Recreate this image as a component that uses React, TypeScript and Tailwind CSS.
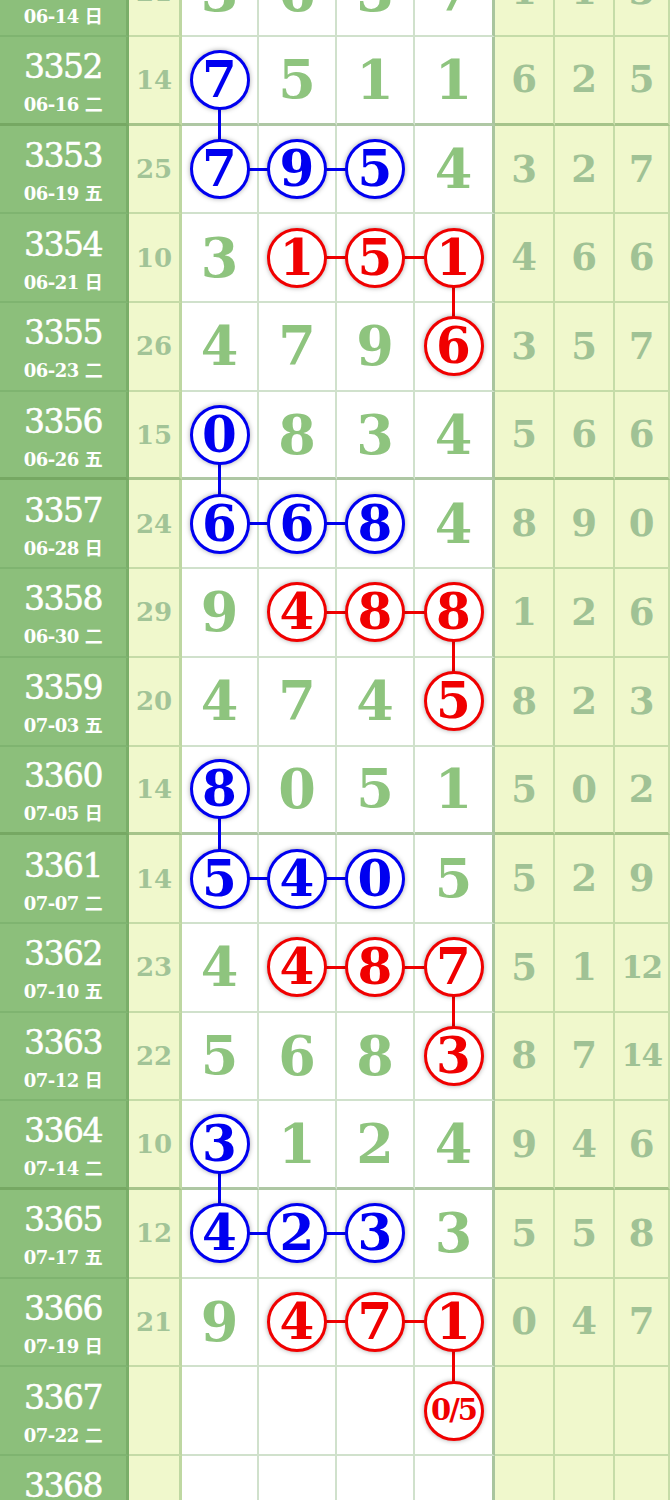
import React from 'react';

type Row = { p: string; d: string; w: string; s: string; m: string[]; c: string; r: string[] };

const rows: Row[] = [
  { p: '3351', d: '06-14', w: '日', s: '21', m: ['3', '6', '3', '7'], c: '....', r: ['1', '1', '3'] },
  { p: '3352', d: '06-16', w: '二', s: '14', m: ['7', '5', '1', '1'], c: 'b...', r: ['6', '2', '5'] },
  { p: '3353', d: '06-19', w: '五', s: '25', m: ['7', '9', '5', '4'], c: 'bbb.', r: ['3', '2', '7'] },
  { p: '3354', d: '06-21', w: '日', s: '10', m: ['3', '1', '5', '1'], c: '.rrr', r: ['4', '6', '6'] },
  { p: '3355', d: '06-23', w: '二', s: '26', m: ['4', '7', '9', '6'], c: '...r', r: ['3', '5', '7'] },
  { p: '3356', d: '06-26', w: '五', s: '15', m: ['0', '8', '3', '4'], c: 'b...', r: ['5', '6', '6'] },
  { p: '3357', d: '06-28', w: '日', s: '24', m: ['6', '6', '8', '4'], c: 'bbb.', r: ['8', '9', '0'] },
  { p: '3358', d: '06-30', w: '二', s: '29', m: ['9', '4', '8', '8'], c: '.rrr', r: ['1', '2', '6'] },
  { p: '3359', d: '07-03', w: '五', s: '20', m: ['4', '7', '4', '5'], c: '...r', r: ['8', '2', '3'] },
  { p: '3360', d: '07-05', w: '日', s: '14', m: ['8', '0', '5', '1'], c: 'b...', r: ['5', '0', '2'] },
  { p: '3361', d: '07-07', w: '二', s: '14', m: ['5', '4', '0', '5'], c: 'bbb.', r: ['5', '2', '9'] },
  { p: '3362', d: '07-10', w: '五', s: '23', m: ['4', '4', '8', '7'], c: '.rrr', r: ['5', '1', '12'] },
  { p: '3363', d: '07-12', w: '日', s: '22', m: ['5', '6', '8', '3'], c: '...r', r: ['8', '7', '14'] },
  { p: '3364', d: '07-14', w: '二', s: '10', m: ['3', '1', '2', '4'], c: 'b...', r: ['9', '4', '6'] },
  { p: '3365', d: '07-17', w: '五', s: '12', m: ['4', '2', '3', '3'], c: 'bbb.', r: ['5', '5', '8'] },
  { p: '3366', d: '07-19', w: '日', s: '21', m: ['9', '4', '7', '1'], c: '.rrr', r: ['0', '4', '7'] },
  { p: '3367', d: '07-22', w: '二', s: '', m: ['', '', '', '0/5'], c: '...r', r: ['', '', ''] },
  { p: '3368', d: '07-24', w: '五', s: '', m: ['', '', '', ''], c: '....', r: ['', '', ''] },
];

const mainW = ['w-[77px]', 'w-[78px]', 'w-[78px]', 'w-[80px]'];
const rightW = ['w-[60px]', 'w-[60px]', 'w-[55px]'];

const serif = "font-['DejaVu_Serif','Noto_Sans_CJK_SC',serif]";
const cjk = "font-['Noto_Sans_CJK_SC',sans-serif]";

function Circle({ v, color }: { v: string; color: string }) {
  const blue = color === 'b';
  const small = v.length > 1;
  return (
    <div
      className={`relative z-10 flex h-[60px] w-[60px] items-center justify-center rounded-full border-[3px] bg-white font-bold leading-none shadow-[0_0_5px_rgba(0,0,0,0.35)] ${
        blue ? 'border-[#0000f0] text-[#0000f0]' : 'border-[#f00000] text-[#f00000]'
      } ${small ? 'text-[29px] tracking-[-2px]' : 'text-[50px]'}`}
    >
      {v}
    </div>
  );
}

export default function App() {
  return (
    <div className={`w-[670px] overflow-hidden bg-white ${serif}`}>
      <div className="-mt-[51.7px]">
        {rows.map((row, ri) => {
          const thick = ri >= 1 && (ri - 1) % 4 === 0;
          const prev = rows[ri - 1];
          const next = rows[ri + 1];
          const bb = thick
            ? 'border-b-[3px] border-b-[rgba(95,145,75,0.5)]'
            : 'border-b-2 border-b-[rgba(100,155,85,0.3)]';
          return (
            <div key={row.p} className="flex h-[88.7px]">
              <div
                className={`flex h-full w-[129px] shrink-0 flex-col items-center justify-center border-r-[3px] border-r-[#7aae69] bg-[#8cbf7b] pt-[3px] text-white ${bb}`}
              >
                <div className="text-[33px] leading-[40px] tracking-[-1.5px] [-webkit-text-stroke:0.5px_#fff]">
                  {row.p}
                </div>
                <div className="mt-[5px] text-[18px] font-bold leading-[22px] tracking-[-0.5px]">
                  {row.d} <span className={`${cjk} font-bold`}>{row.w}</span>
                </div>
              </div>
              <div
                className={`flex h-full w-[53px] shrink-0 items-center justify-center border-r-[3px] border-r-[rgba(100,155,85,0.35)] bg-[#f0f8cc] text-[26px] font-bold leading-none text-[#a2c497] ${bb}`}
              >
                {row.s}
              </div>
              {row.m.map((v, ci) => {
                const col = row.c[ci];
                const circled = col !== '.';
                const left = circled && ci > 0 && row.c[ci - 1] === col;
                const right = circled && ci < 3 && row.c[ci + 1] === col;
                const up = circled && prev && prev.c[ci] === col;
                const down = circled && next && next.c[ci] === col;
                const lineBg = col === 'b' ? 'bg-[#0000f0]' : 'bg-[#f00000]';
                return (
                  <div
                    key={ci}
                    className={`relative flex h-full shrink-0 items-center justify-center bg-white ${mainW[ci]} ${bb} ${
                      ci === 3 ? 'border-r-[3px] border-r-[rgba(100,150,80,0.55)]' : 'border-r-2 border-r-[rgba(100,155,85,0.3)]'
                    }`}
                  >
                    {left && <div className={`absolute left-0 right-1/2 top-1/2 -mt-[1.5px] h-[3px] ${lineBg}`} />}
                    {right && <div className={`absolute -right-[2px] left-1/2 top-1/2 -mt-[1.5px] h-[3px] ${lineBg}`} />}
                    {up && <div className={`absolute bottom-1/2 left-1/2 top-0 -ml-[1.5px] w-[3px] ${lineBg}`} />}
                    {down && <div className={`absolute -bottom-[3px] left-1/2 top-1/2 -ml-[1.5px] w-[3px] ${lineBg}`} />}
                    {circled && v !== '' ? (
                      <Circle v={v} color={col} />
                    ) : (
                      <span className="text-[54px] font-bold leading-none text-[#8ec47e]">{v}</span>
                    )}
                  </div>
                );
              })}
              {row.r.map((v, ci) => (
                <div
                  key={'r' + ci}
                  className={`flex h-full shrink-0 items-center justify-center border-r-2 border-r-[rgba(100,155,85,0.3)] bg-[#f0f8cc] font-bold leading-none text-[#a0c295] ${rightW[ci]} ${bb} ${
                    v.length > 1 ? 'text-[31px] tracking-[-1.5px]' : 'text-[37px]'
                  }`}
                >
                  {v}
                </div>
              ))}
            </div>
          );
        })}
      </div>
    </div>
  );
}
